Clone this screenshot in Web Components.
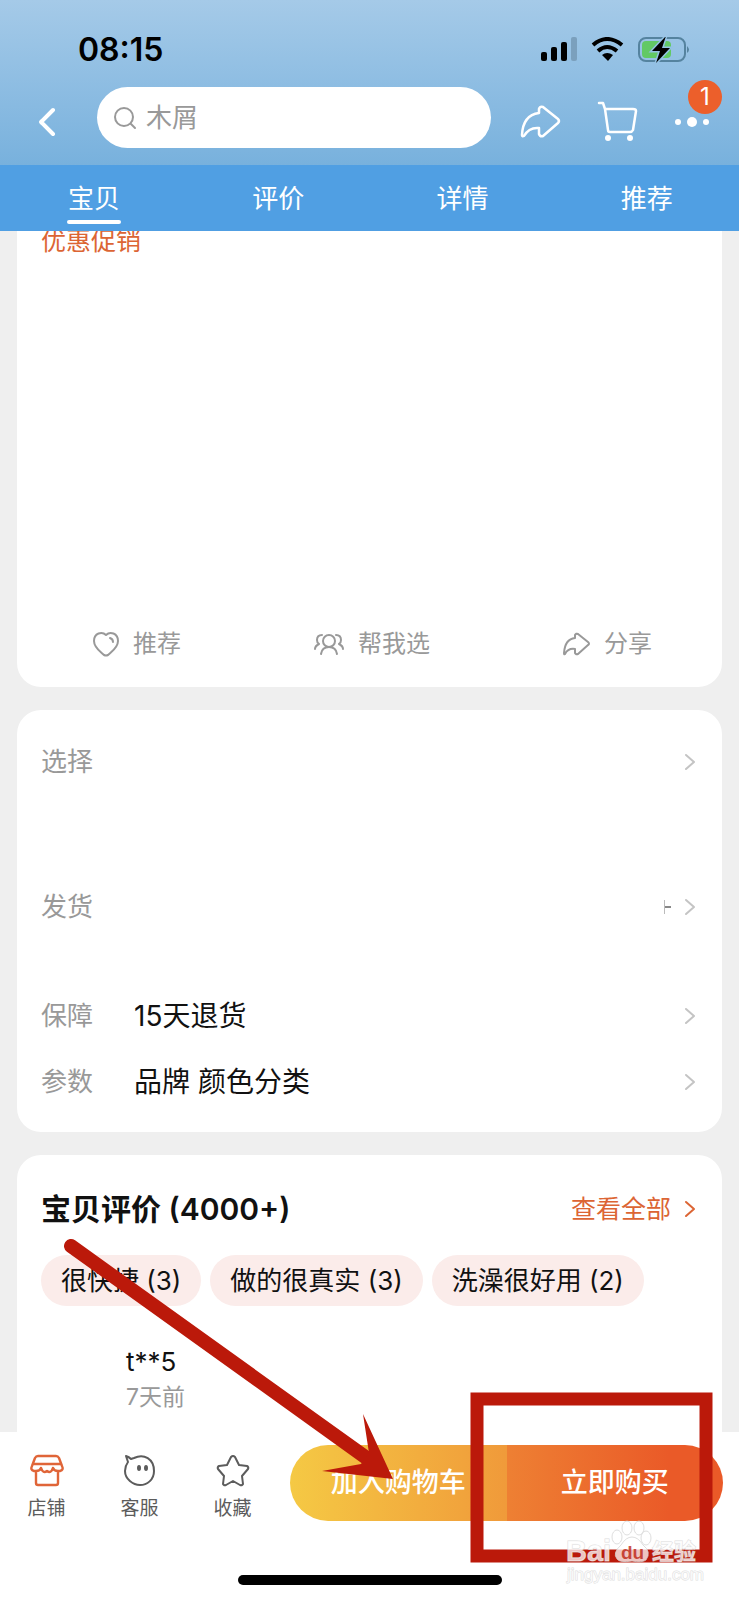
<!DOCTYPE html>
<html lang="zh-CN">
<head>
<meta charset="utf-8">
<meta name="viewport" content="width=device-width, initial-scale=1">
<title>商品详情</title>
<style>
  html, body { margin: 0; min-height: 100%; }
  body {
    background: #efefef;
    color: #111;
    font-family: Inter, "Noto Sans CJK SC", sans-serif;
    font-size: 26px;
    line-height: 36px;
  }
</style>
</head>
<body>
<product-page></product-page>

<script>
const ICONS = {
  back: '<path d="M15 3 3 15l12 12" stroke-width="4"/>',
  search: '<circle cx="10" cy="10" r="9"/><path d="m17 17 4 4"/>',
  chevron: '<path d="m2 2 8 7-8 7"/>',
  share: '<path stroke-width="2.5" d="M18 8V4q1-3 4-2l15 12q2 2 0 4L22 31q-3 1-4-2v-6Q8 22 3 31q-2 1-2-1Q2 10 18 8Z"/>',
  cart: '<path stroke-width="2.5" d="M1 1h4l2 6 3 21q0 2 2 2h20q2 0 3-2l3-19q0-2-3-2H7"/><g class="dot"><circle cx="10" cy="36" r="3"/><circle cx="32" cy="36" r="3"/></g>',
  more: '<g class="dot"><circle cx="3" cy="5" r="3"/><circle cx="17" cy="5" r="5"/><circle cx="31" cy="5" r="3"/></g>',
  heart: '<path d="M13 3C9-1 1 1 1 9c0 7 7 11 10 14q2 1 4 0c3-3 10-7 10-14 0-8-8-10-12-6Z"/><path d="M17 6q3 1 3 4"/>',
  people: '<circle cx="15" cy="8" r="6"/><path d="M7 21q1-7 8-7t8 7M8 2Q3 2 3 7q0 3 2 4-4 2-4 5M22 2q5 0 5 5 0 3-2 4 4 2 4 5"/>',
  shareSmall: '<path d="M12 5V2q1-2 3-1l10 8q2 2 0 3l-10 9q-2 1-3-1v-4Q5 15 2 21q-1 1-1-1Q2 6 12 5Z"/>',
  shop: '<path d="M7 1h18q2 0 3 2l3 8q2 4-2 5h-2q-4 0-5-3-2 6-6 3-4 3-6-3-1 3-5 3H3q-4-1-2-5l3-8q1-2 3-2ZM3 9h26M5 16v12q0 2 2 2h18q2 0 2-2V16" stroke-width="2.4"/>',
  chat: '<path d="M2 1q3 1 5 3l3-1c10-5 20 1 20 13 0 9-7 14-14 14S1 24 1 16q0-5 3-9L2 1Z"/><g class="dot"><ellipse cx="15" cy="13" rx="2" ry="3"/><ellipse cx="22" cy="13" rx="2" ry="3"/></g>',
  star: '<path d="M14 2q2-2 4 0l4 8 8 1q2 1 1 3l-6 7 1 8q-1 2-3 1l-7-4-7 4q-2 1-3-1l1-8-6-7q-1-2 1-3l8-1 4-8Z"/>',
};

const BOXES = {
  back: [18, 30], search: [22, 22], chevron: [12, 18], share: [39, 33], cart: [39, 40],
  more: [34, 10], heart: [26, 25], people: [30, 23], shareSmall: [27, 23],
  shop: [32, 31], chat: [31, 31], star: [32, 31],
};

class UiIcon extends HTMLElement {
  connectedCallback() {
    const name = this.getAttribute('name');
    const [w, h] = BOXES[name];
    this.attachShadow({ mode: 'open' }).innerHTML = `
      <style>
        :host { display: inline-flex; flex: none; }
        svg { display: block; overflow: visible; fill: none; stroke: currentColor;
          stroke-width: 2; stroke-linecap: round; stroke-linejoin: round; }
        .dot { fill: currentColor; stroke: none; }
      </style>
      <svg width="${w}" height="${h}" viewBox="0 0 ${w} ${h}" aria-hidden="true">${ICONS[name]}</svg>
    `;
  }
}

class StatusBar extends HTMLElement {
  connectedCallback() {
    this.attachShadow({ mode: 'open' }).innerHTML = `
      <style>
        :host { display: flex; justify-content: space-between; align-items: center;
          padding: 32px 49px 0 78px; height: 36px; color: #000; }
        time { font-size: 32px; font-weight: 600; }
        svg { display: block; }
      </style>
      <time>08:15</time>
      <svg width="149" height="26" viewBox="0 0 149 26" aria-hidden="true">
        <rect x="0" y="15" width="6" height="9" rx="2"/>
        <rect x="10" y="10" width="6" height="14" rx="2"/>
        <rect x="20" y="5" width="6" height="19" rx="2"/>
        <rect x="30" y="0" width="6" height="24" rx="2" fill="#7ba0bd"/>
        <g fill="none" stroke="#000" stroke-width="4">
          <path d="M52 8Q66-4 81 8"/><path d="M57 14q9-8 19 0"/>
        </g>
        <path d="M61 18q5-4 11 0l-5 6Z"/>
        <rect x="98" y="1" width="46" height="23" rx="7" fill="none" stroke="#55839f" stroke-width="2"/>
        <path d="M146 9q4 4 0 7Z" fill="#55839f"/>
        <rect x="101" y="4" width="29" height="17" rx="4" fill="#62c965"/>
        <path d="m125-1-14 15h8l-4 12 14-15h-8Z" stroke="#93c2e4" stroke-width="3" paint-order="stroke"/>
      </svg>
    `;
  }
}

class SearchHeader extends HTMLElement {
  connectedCallback() {
    this.attachShadow({ mode: 'open' }).innerHTML = `
      <style>
        :host { display: flex; align-items: center; padding: 19px 30px 17px 38px; color: #fff; }
        button { position: relative; display: flex; padding: 0; border: 0; background: none; color: inherit; font: inherit; }
        .back { margin: 8px 41px 0 0; }
        label { flex: 1; min-width: 0; display: flex; align-items: center; gap: 10px; height: 61px;
          padding-left: 17px; box-sizing: border-box; border-radius: 31px; background: #fff; color: #999; }
        input { flex: 1; min-width: 0; border: 0; outline: 0; padding: 0; background: none; font: inherit; color: #999; }
        input::placeholder { color: #999; opacity: 1; }
        .tools { display: flex; align-items: center; gap: 38px; margin: 8px 0 0 30px; }
        .badge { position: absolute; right: -13px; bottom: 13px; width: 34px; height: 34px;
          border-radius: 50%; background: #ec5f2b; font-size: 24px; line-height: 34px; text-align: center; }
      </style>
      <button class="back" aria-label="返回"><ui-icon name="back"></ui-icon></button>
      <label><ui-icon name="search"></ui-icon><input type="text" placeholder="木屑" aria-label="搜索"></label>
      <div class="tools">
        <button aria-label="分享"><ui-icon name="share"></ui-icon></button>
        <button aria-label="购物车"><ui-icon name="cart"></ui-icon></button>
        <button aria-label="更多"><ui-icon name="more"></ui-icon><span class="badge">1</span></button>
      </div>
    `;
  }
}

class TabBar extends HTMLElement {
  connectedCallback() {
    const tabs = ['宝贝', '评价', '详情', '推荐'];
    this.attachShadow({ mode: 'open' }).innerHTML = `
      <style>
        nav { display: grid; grid-template-columns: repeat(4, 1fr); padding-left: 2px; background: #509fe3; }
        a { display: flex; flex-direction: column; align-items: center; gap: 3px; height: 66px;
          padding-top: 16px; box-sizing: border-box; color: #fff; text-decoration: none; }
        a.active::after { content: ""; width: 54px; height: 4px; border-radius: 2px; background: #fff; }
      </style>
      <nav>${tabs.map((t, i) => `<a href="#" class="${i === 0 ? 'active' : ''}">${t}</a>`).join('')}</nav>
    `;
  }
}

class PageCard extends HTMLElement {
  connectedCallback() {
    this.attachShadow({ mode: 'open' }).innerHTML = `
      <style>
        :host { display: block; padding: 0 24px; border-radius: 24px; background: #fff; }
      </style>
      <slot></slot>
    `;
  }
}

class InfoRow extends HTMLElement {
  connectedCallback() {
    this.attachShadow({ mode: 'open' }).innerHTML = `
      <style>
        :host { display: block; }
        a { display: flex; align-items: center; color: #111; text-decoration: none; }
        .label { width: 93px; color: #999; }
        .value { flex: 1; font-size: 28px; }
        .note { width: 6px; height: 14px; margin-right: 13px; border-left: 1px solid #bbb; }
        .note::before { content: ""; display: block; height: 2px; margin-top: 6px; background: #888; }
        ui-icon { color: #c4c4c4; margin-right: 2px; }
      </style>
      <a href="#">
        <span class="label">${this.getAttribute('label')}</span>
        <span class="value"><slot></slot></span>
        ${this.hasAttribute('note') ? '<span class="note"></span>' : ''}
        <ui-icon name="chevron"></ui-icon>
      </a>
    `;
  }
}

class ReviewPanel extends HTMLElement {
  connectedCallback() {
    const tags = ['很快捷 (3)', '做的很真实 (3)', '洗澡很好用 (2)'];
    this.attachShadow({ mode: 'open' }).innerHTML = `
      <style>
        :host { display: block; padding-top: 34px; }
        header { display: flex; justify-content: space-between; align-items: center; }
        h2 { margin: 0; font-size: 30px; line-height: 40px; font-weight: 600; }
        header a { display: flex; align-items: center; gap: 13px; margin-right: 2px; font-size: 25px; color: #dc6534; text-decoration: none; }
        .tags { display: flex; gap: 9px; margin-top: 26px; }
        .tags button { height: 51px; padding: 0 20px; border: 0; border-radius: 26px; background: #fbecea;
          color: #111; font: inherit; line-height: 51px; white-space: nowrap; }
        .review { padding: 38px 0 0 85px; }
        .user { line-height: 36px; }
        .date { font-size: 23px; line-height: 34px; color: #999; }
      </style>
      <header>
        <h2>宝贝评价 (4000+)</h2>
        <a href="#">查看全部<ui-icon name="chevron"></ui-icon></a>
      </header>
      <div class="tags">${tags.map(t => `<button>${t}</button>`).join('')}</div>
      <div class="review">
        <div class="user">t**5</div>
        <div class="date">7天前</div>
      </div>
    `;
  }
}

class BuyBar extends HTMLElement {
  connectedCallback() {
    this.attachShadow({ mode: 'open' }).innerHTML = `
      <style>
        :host { display: block; padding: 13px 0 15px; background: #fff; }
        .row { display: flex; align-items: flex-start; padding-right: 16px; }
        .links { flex: 290; display: grid; grid-template-columns: repeat(3, 93px); }
        .links a { display: flex; flex-direction: column; align-items: center; gap: 10px; padding-top: 10px;
          font-size: 19px; line-height: 26px; color: #5c5c5c; text-decoration: none; }
        .links .shop ui-icon { color: #e06538; }
        .actions { flex: 433; display: flex; height: 76px; border-radius: 38px; overflow: hidden; }
        button { flex: 1; padding: 0; border: 0; color: #fff; font: inherit; font-size: 27px; font-weight: 500; }
        .add { background: linear-gradient(90deg, #f5c944, #f09a3a); }
        .buy { background: linear-gradient(90deg, #ee8033, #ea5a28 75%); }
        .home { width: 264px; height: 10px; margin: 53px auto 0; border-radius: 5px; background: #000; }
      </style>
      <div class="row">
        <div class="links">
          <a href="#" class="shop"><ui-icon name="shop"></ui-icon>店铺</a>
          <a href="#"><ui-icon name="chat"></ui-icon>客服</a>
          <a href="#"><ui-icon name="star"></ui-icon>收藏</a>
        </div>
        <div class="actions">
          <button class="add">加入购物车</button>
          <button class="buy">立即购买</button>
        </div>
      </div>
      <div class="home"></div>
    `;
  }
}

// Arrow, frame and site mark drawn above the page
class MarkLayer extends HTMLElement {
  connectedCallback() {
    this.attachShadow({ mode: 'open' }).innerHTML = `
      <style>
        :host { position: absolute; left: 0; right: 0; bottom: 0; pointer-events: none; }
        svg { display: block; width: 100%; height: auto; }
        text { font-family: "Liberation Sans", "Noto Sans CJK SC", sans-serif; }
      </style>
      <svg viewBox="0 1200 739 400">
        <path d="M71 1246 368 1459" stroke="#bb190a" stroke-width="14" stroke-linecap="round"/>
        <path d="m393 1479-71-8 39-7 8-11-6-39Z" fill="#bb190a"/>
        <rect x="477" y="1399" width="229" height="157" fill="none" stroke="#bb190a" stroke-width="13"/>
        <g fill="#fff" fill-opacity=".75" stroke="#d0d0d0" stroke-opacity=".7">
          <ellipse cx="617" cy="1537" rx="5" ry="7"/>
          <ellipse cx="627" cy="1528" rx="5" ry="7"/>
          <ellipse cx="639" cy="1528" rx="5" ry="7"/>
          <ellipse cx="646" cy="1538" rx="5" ry="7"/>
          <path d="M632 1537q6 0 11 8 9 7 3 15-4 3-14 1-12 2-15-2-5-6 4-14 5-8 11-8Z"/>
          <g font-weight="700" paint-order="stroke">
            <text x="566" y="1561" font-size="29">Bai</text>
            <text x="652" y="1559" font-size="22">经验</text>
            <text x="567" y="1580" font-size="17" font-weight="400">jingyan.baidu.com</text>
          </g>
        </g>
        <text x="621" y="1559" font-size="19" font-weight="700" fill="#bb190a" fill-opacity=".75">du</text>
      </svg>
    `;
  }
}

class ProductPage extends HTMLElement {
  connectedCallback() {
    this.attachShadow({ mode: 'open' }).innerHTML = `
      <style>
        :host { position: relative; display: flex; flex-direction: column; min-height: 100vh; }
        .top { background: linear-gradient(#a5cae8, #78b1dd); }
        main { flex: 1; display: flex; flex-direction: column; gap: 23px; padding: 0 17px; }
        .goods { display: flex; flex-direction: column; height: 456px; box-sizing: border-box;
          padding-bottom: 25px; border-radius: 0 0 24px 24px; overflow: hidden; }
        .promo { flex: 1; font-size: 25px; line-height: 20px; color: #dc6534; }
        .actions { display: flex; justify-content: space-between; padding: 0 46px 0 52px; }
        .actions button { display: flex; align-items: center; gap: 14px; padding: 0; border: 0;
          background: none; color: #999; font: inherit; font-size: 24px; }
        .rows { padding-top: 34px; padding-bottom: 32px; }
        .ship { margin: 109px 0 73px; }
        .params { margin-top: 30px; }
        .reviews { flex: 1; border-radius: 24px 24px 0 0; }
      </style>
      <div class="top">
        <status-bar></status-bar>
        <search-header></search-header>
      </div>
      <tab-bar></tab-bar>
      <main>
        <page-card class="goods">
          <div class="promo">优惠促销</div>
          <div class="actions">
            <button><ui-icon name="heart"></ui-icon>推荐</button>
            <button><ui-icon name="people"></ui-icon>帮我选</button>
            <button><ui-icon name="shareSmall"></ui-icon>分享</button>
          </div>
        </page-card>
        <page-card class="rows">
          <info-row label="选择"></info-row>
          <info-row class="ship" label="发货" note></info-row>
          <info-row label="保障">15天退货</info-row>
          <info-row class="params" label="参数">品牌 颜色分类</info-row>
        </page-card>
        <page-card class="reviews"><review-panel></review-panel></page-card>
      </main>
      <buy-bar></buy-bar>
      <mark-layer></mark-layer>
    `;
  }
}

customElements.define('ui-icon', UiIcon);
customElements.define('status-bar', StatusBar);
customElements.define('search-header', SearchHeader);
customElements.define('tab-bar', TabBar);
customElements.define('page-card', PageCard);
customElements.define('info-row', InfoRow);
customElements.define('review-panel', ReviewPanel);
customElements.define('buy-bar', BuyBar);
customElements.define('mark-layer', MarkLayer);
customElements.define('product-page', ProductPage);
</script>
</body>
</html>
